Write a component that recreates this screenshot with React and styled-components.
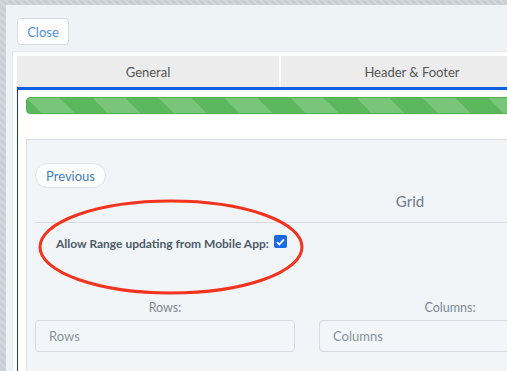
import React from 'react';
import styled, { createGlobalStyle } from 'styled-components';

const Global = createGlobalStyle`
  html, body {
    margin: 0;
    padding: 0;
    overflow: hidden;
  }
  body {
    font-family: Lato, "Open Sans", sans-serif;
    background-color: #c9cfd5;
    background-image: repeating-linear-gradient(45deg, rgba(255,255,255,0.18) 0 2px, transparent 2px 5px);
  }
`

const Page = styled.div`
  position: relative;
  width: 507px;
  height: 371px;
  padding: 5px 0 0 6px;
  box-sizing: border-box;
  overflow: hidden;
`

const Modal = styled.div`
  background: #eef3f6;
  width: 900px;
  height: 420px;
  padding: 13px 0 0 6px;
  box-sizing: border-box;
`

const ModalHeader = styled.div`
  display: flex;
  padding-left: 5px;
  margin-bottom: 6px;
`

const CloseButton = styled.button`
  font-family: Lato, sans-serif;
  font-size: 13px;
  color: #4d8ae6;
  background: #fff;
  border: 1px solid #d6dce2;
  border-radius: 4px;
  width: 52px;
  height: 27px;
  padding: 0;
`

const Content = styled.div`
  background: #fff;
  border: 1px solid #e4e8ec;
  padding: 4px;
  width: 880px;
  height: 400px;
`

const Tabs = styled.div`
  display: flex;
  gap: 2px;
`

const Tab = styled.div`
  width: 262px;
  height: 31px;
  display: flex;
  align-items: center;
  justify-content: center;
  background: #ececec;
  color: #555;
  font-size: 13px;
`

const Pane = styled.div`
  border-top: 3px solid #0c5fe4;
  border-left: 1px solid #1b25d6;
  padding: 7px 0 0 8px;
  background: #fff;
`

const Progress = styled.div`
  height: 15px;
  border-radius: 4px;
  border: 1px solid #52b052;
  background-color: #5cb85c;
  background-image: linear-gradient(45deg, rgba(255,255,255,.18) 25%, transparent 25%, transparent 50%, rgba(255,255,255,.18) 50%, rgba(255,255,255,.18) 75%, transparent 75%, transparent);
  background-size: 66px 66px;
  margin-bottom: 25px;
`

const Panel = styled.div`
  width: 750px;
  background: #f2f5f8;
  border: 1px solid #d9dfe4;
  padding: 23px 8px 40px 8px;
`

const PrevButton = styled.button`
  font-family: Lato, sans-serif;
  font-size: 13px;
  color: #3f7cb6;
  background: #fff;
  border: 1px solid #dde2e7;
  border-radius: 13px;
  width: 71px;
  height: 25px;
  padding: 0;
  display: block;
`

const Heading = styled.div`
  text-align: center;
  color: #6d7d8c;
  font-size: 15px;
  line-height: 20px;
  padding: 3px 0 11px 0;
  border-bottom: 1px solid #d6dce1;
`

const CheckRow = styled.label`
  display: flex;
  align-items: center;
  gap: 5px;
  margin: 13px 0 0 21px;
  color: #4c5a68;
  font-size: 12px;
  font-weight: 700;
`

const Check = styled.span`
  width: 13px;
  height: 13px;
  border-radius: 2px;
  background: #1a6ae6;
  display: flex;
  align-items: center;
  justify-content: center;
  margin-top: -4px;
`

const Fields = styled.div`
  display: grid;
  grid-template-columns: 260px 262px;
  gap: 24px;
  margin-top: 49px;
`

const Field = styled.div`
  display: flex;
  flex-direction: column;
`

const FieldLabel = styled.div`
  text-align: center;
  color: #7b8894;
  font-size: 12.5px;
  line-height: 16px;
  margin-bottom: 4px;
`

const Input = styled.div`
  height: 30px;
  border: 1px solid #d4dbe2;
  border-radius: 4px;
  background: #f3f6f8;
  color: #86929d;
  font-size: 13px;
  display: flex;
  align-items: center;
  padding-left: 13px;
`

const Annotation = styled.svg`
  position: absolute;
  left: 0;
  top: 0;
  pointer-events: none;
`

export default function App() {
  return (
    <>
      <Global />
      <Page>
        <Modal>
          <ModalHeader>
            <CloseButton>Close</CloseButton>
          </ModalHeader>
          <Content>
            <Tabs>
              <Tab>General</Tab>
              <Tab>Header &amp; Footer</Tab>
            </Tabs>
            <Pane>
              <Progress />
              <Panel>
                <PrevButton>Previous</PrevButton>
                <Heading>Grid</Heading>
                <CheckRow>
                  Allow Range updating from Mobile App:
                  <Check>
                    <svg width="9" height="8" viewBox="0 0 9 8">
                      <path d="M1 4.2 L3.4 6.4 L8 1.4" fill="none" stroke="#fff" strokeWidth="1.8" />
                    </svg>
                  </Check>
                </CheckRow>
                <Fields>
                  <Field>
                    <FieldLabel>Rows:</FieldLabel>
                    <Input>Rows</Input>
                  </Field>
                  <Field>
                    <FieldLabel>Columns:</FieldLabel>
                    <Input>Columns</Input>
                  </Field>
                </Fields>
              </Panel>
            </Pane>
          </Content>
        </Modal>
        <Annotation width="507" height="371">
          <ellipse cx="171" cy="247" rx="131" ry="46" fill="none" stroke="#f2341e" strokeWidth="3" />
        </Annotation>
      </Page>
    </>
  )
}
